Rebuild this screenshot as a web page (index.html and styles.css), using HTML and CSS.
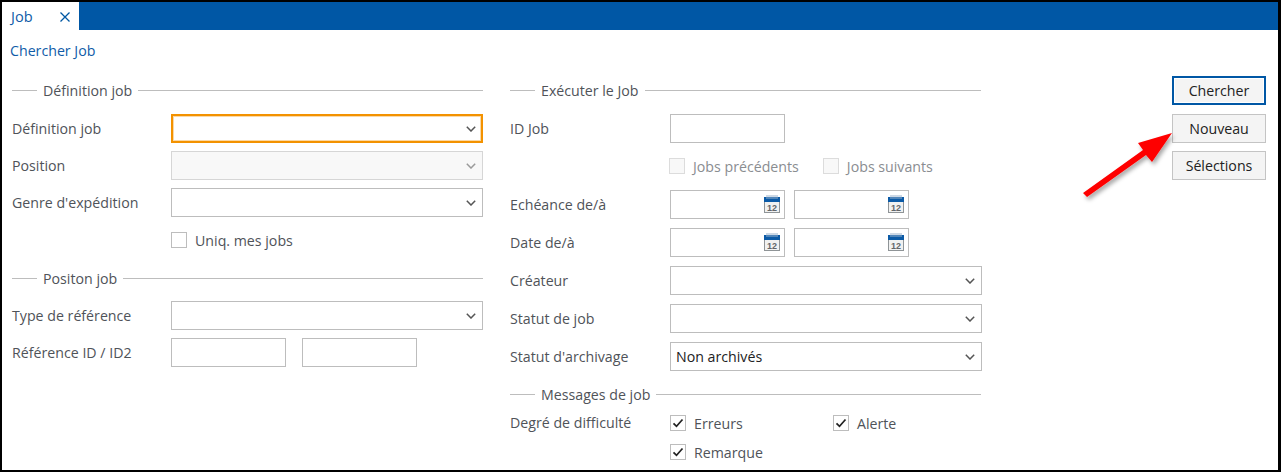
FILE: index.html
```html
<!DOCTYPE html>
<html lang="fr">
<head>
<meta charset="utf-8">
<title>Job</title>
<link rel="stylesheet" href="styles.css">
</head>
<body>
<svg class="defs" width="0" height="0" aria-hidden="true">
  <symbol id="cal" viewBox="0 0 16 18">
    <rect x="0" y="2" width="16" height="16" fill="#8f9497"/>
    <rect x="1" y="7" width="14" height="10" fill="#f0f1f1"/>
    <rect x="0" y="2" width="16" height="5" fill="#0b5aa6"/>
    <path d="M3 0v4M5 0v4M7 0v4M9 0v4M11 0v4M13 0v4" stroke="#9ab2cc" stroke-width="1"/>
  </symbol>
  <symbol id="chev" viewBox="0 0 10 6"><path d="M0.800 0.800L5 5L9.200 0.800" fill="none" stroke="currentColor" stroke-width="1.500"/></symbol>
</svg>
<div class="frame">
  <div class="tabbar">
    <div class="tab"><span>Job</span>
      <svg class="tab-x" width="10" height="10" viewBox="0 0 10 10"><path d="M0.500 0.500l9 9M9.500 0.500l-9 9" stroke="#0057a3" stroke-width="1.300" fill="none"/></svg>
    </div>
  </div>
  <div class="crumb">Chercher Job</div>
  <div class="content">
    <section class="col">
      <div class="legend"><span>Définition job</span></div>
      <div class="row row-def"><label>Définition job</label><div class="field select focus"><svg class="chev"><use href="#chev"/></svg></div></div>
      <div class="row"><label>Position</label><div class="field select disabled"><svg class="chev light"><use href="#chev"/></svg></div></div>
      <div class="row"><label>Genre d'expédition</label><div class="field select"><svg class="chev"><use href="#chev"/></svg></div></div>
      <div class="check-row uniq"><span class="check"></span><span class="check-label">Uniq. mes jobs</span></div>
      <div class="legend legend-pos"><span>Positon job</span></div>
      <div class="row row-type"><label>Type de référence</label><div class="field select"><svg class="chev"><use href="#chev"/></svg></div></div>
      <div class="row"><label>Référence ID / ID2</label><div class="pair pair-ref"><div class="field"></div><div class="field"></div></div></div>
    </section>
    <section class="col col-right">
      <div class="legend"><span>Exécuter le Job</span></div>
      <div class="row row-def"><label>ID Job</label><div class="field short"></div></div>
      <div class="check-row prev"><span class="check disabled"></span><span class="check-label muted">Jobs précédents</span><span class="check disabled second"></span><span class="check-label muted">Jobs suivants</span></div>
      <div class="row row-date"><label>Echéance de/à</label><div class="pair">
        <div class="field date"><svg class="cal" viewBox="0 0 16 18"><use href="#cal"/><text x="8" y="15.500" text-anchor="middle" class="cal-num">12</text></svg></div>
        <div class="field date"><svg class="cal" viewBox="0 0 16 18"><use href="#cal"/><text x="8" y="15.500" text-anchor="middle" class="cal-num">12</text></svg></div>
      </div></div>
      <div class="row"><label>Date de/à</label><div class="pair">
        <div class="field date"><svg class="cal" viewBox="0 0 16 18"><use href="#cal"/><text x="8" y="15.500" text-anchor="middle" class="cal-num">12</text></svg></div>
        <div class="field date"><svg class="cal" viewBox="0 0 16 18"><use href="#cal"/><text x="8" y="15.500" text-anchor="middle" class="cal-num">12</text></svg></div>
      </div></div>
      <div class="row"><label>Créateur</label><div class="field select"><svg class="chev"><use href="#chev"/></svg></div></div>
      <div class="row"><label>Statut de job</label><div class="field select"><svg class="chev"><use href="#chev"/></svg></div></div>
      <div class="row"><label>Statut d'archivage</label><div class="field select value">Non archivés<svg class="chev"><use href="#chev"/></svg></div></div>
      <div class="legend legend-msg"><span>Messages de job</span></div>
      <div class="row-checks">
        <label class="diff">Degré de difficulté</label>
        <div class="checks-grid">
          <div class="check-item"><span class="check on"><svg width="12" height="12" viewBox="0 0 12 12"><path d="M1.500 6.300l3 3L10.500 2.500" fill="none" stroke="#222" stroke-width="1.700"/></svg></span><span class="check-label">Erreurs</span></div>
          <div class="check-item"><span class="check on"><svg width="12" height="12" viewBox="0 0 12 12"><path d="M1.500 6.300l3 3L10.500 2.500" fill="none" stroke="#222" stroke-width="1.700"/></svg></span><span class="check-label">Alerte</span></div>
          <div class="check-item"><span class="check on"><svg width="12" height="12" viewBox="0 0 12 12"><path d="M1.500 6.300l3 3L10.500 2.500" fill="none" stroke="#222" stroke-width="1.700"/></svg></span><span class="check-label">Remarque</span></div>
        </div>
      </div>
    </section>
    <aside class="buttons">
      <button class="btn primary">Chercher</button>
      <button class="btn">Nouveau</button>
      <button class="btn btn-last">Sélections</button>
    </aside>
  </div>
  <svg class="arrow" width="95" height="72" viewBox="0 0 95 72">
    <defs><filter id="sh" x="-20%" y="-20%" width="150%" height="150%"><feDropShadow dx="2" dy="3" stdDeviation="2" flood-color="#000" flood-opacity="0.35"/></filter></defs>
    <path d="M92 3L58 13L63 20L3 63L7 67L66 25L72 32Z" fill="#fe0000" filter="url(#sh)"/>
  </svg>
</div>
</body>
</html>
```
FILE: styles.css
```css
* { box-sizing: border-box; }
html, body { margin: 0; padding: 0; background: #fff; }
body { width: 1281px; height: 472px; overflow: hidden; font-family: "Open Sans", "Noto Sans", sans-serif; font-size: 14.2px; color: #4f5359; }
.defs { position: absolute; }
.frame { position: relative; width: 1281px; height: 472px; border: solid #000; border-width: 2px 3px 2px 2px; overflow: hidden; background: #fff; }
.tabbar { height: 28px; background: #0057a5; display: flex; }
.tab { width: 77px; background: #fff; color: #0f5ca8; display: flex; align-items: center; padding-left: 9px; font-size: 14.6px; }
.tab-x { margin-left: 27px; margin-top: 1px; }
.crumb { color: #0f5ca8; height: 20px; line-height: 20px; margin-top: 11px; padding-left: 8px; }
.content { display: flex; padding-left: 10px; margin-top: 15px; }
.col { width: 471px; flex: none; padding-top: 4px; }
.col-right { margin-left: 27px; width: 472px; }
.col-right .row label { width: 160px; }
.col-right .legend { margin-right: 1px; }
.legend { display: flex; align-items: center; height: 20px; }
.legend::before { content: ""; width: 25px; height: 1px; background: #bdbdbd; }
.legend::after { content: ""; flex: 1; height: 1px; background: #bdbdbd; }
.legend span { padding: 0 6px; }
.legend-pos { margin-top: 19px; }
.legend-msg { margin-top: 13px; }
.row { display: flex; align-items: center; height: 29px; margin-top: 8px; }
.col-right .row { margin-top: 9px; }
.col .row-def { margin-top: 14px; }
.col .row-type { margin-top: 13px; }
.col .row-date { margin-top: 15px; }
.row label { width: 159px; flex: none; }
.field { height: 29px; border: 1px solid #bdbdbd; background: #fff; position: relative; flex: none; }
.select { width: 312px; display: flex; align-items: center; }
.select.focus { border: 2px solid #f39200; box-shadow: inset 0 0 0 1px #fbd9a6; }
.select.disabled { background: #f8f8f8; border-color: #d6d6d6; }
.select.value { color: #222; padding-left: 5px; }
.short { width: 115px; }
.pair { display: flex; gap: 9px; }
.pair .field { width: 115px; }
.pair-ref { gap: 16px; }
.chev { position: absolute; right: 6px; top: 11px; width: 10px; height: 6px; color: #555; }
.focus .chev { right: 5px; top: 10px; }
.chev.light { color: #9a9a9a; }
.cal { position: absolute; right: 4px; top: 4px; width: 16px; height: 18px; }
.cal-num { font: 700 9px "Liberation Sans", sans-serif; fill: #62666a; }
.check-row { display: flex; align-items: center; height: 18px; }
.uniq { margin: 14px 0 0 159px; }
.prev { margin: 14px 0 0 159px; }
.check { width: 16px; height: 16px; border: 1px solid #bdbdbd; background: #fff; flex: none; display: flex; align-items: center; justify-content: center; }
.check.disabled { background: #f8f8f8; border-color: #dcdcdc; }
.check.second { margin-left: 24px; }
.check-label { margin-left: 8px; }
.muted { color: #8a8d91; }
.row-checks { display: flex; margin-top: 10px; }
.diff { width: 160px; flex: none; height: 18px; line-height: 18px; }
.checks-grid { display: grid; grid-template-columns: 163px 1fr; row-gap: 11px; }
.check-item { display: flex; align-items: center; height: 18px; }
.buttons { margin-left: 190px; width: 94px; display: flex; flex-direction: column; gap: 9px; flex: none; }
.btn { width: 94px; height: 29px; border: 1px solid #c4c4c4; background: #f4f4f4; color: #222; font: inherit; padding: 0; }
.btn.primary { border: 2px solid #0057a5; box-shadow: inset 0 0 0 1px #fff; }
.btn-last { margin-top: -1px; }
.arrow { position: absolute; left: 1078px; top: 128px; overflow: visible; }
```
